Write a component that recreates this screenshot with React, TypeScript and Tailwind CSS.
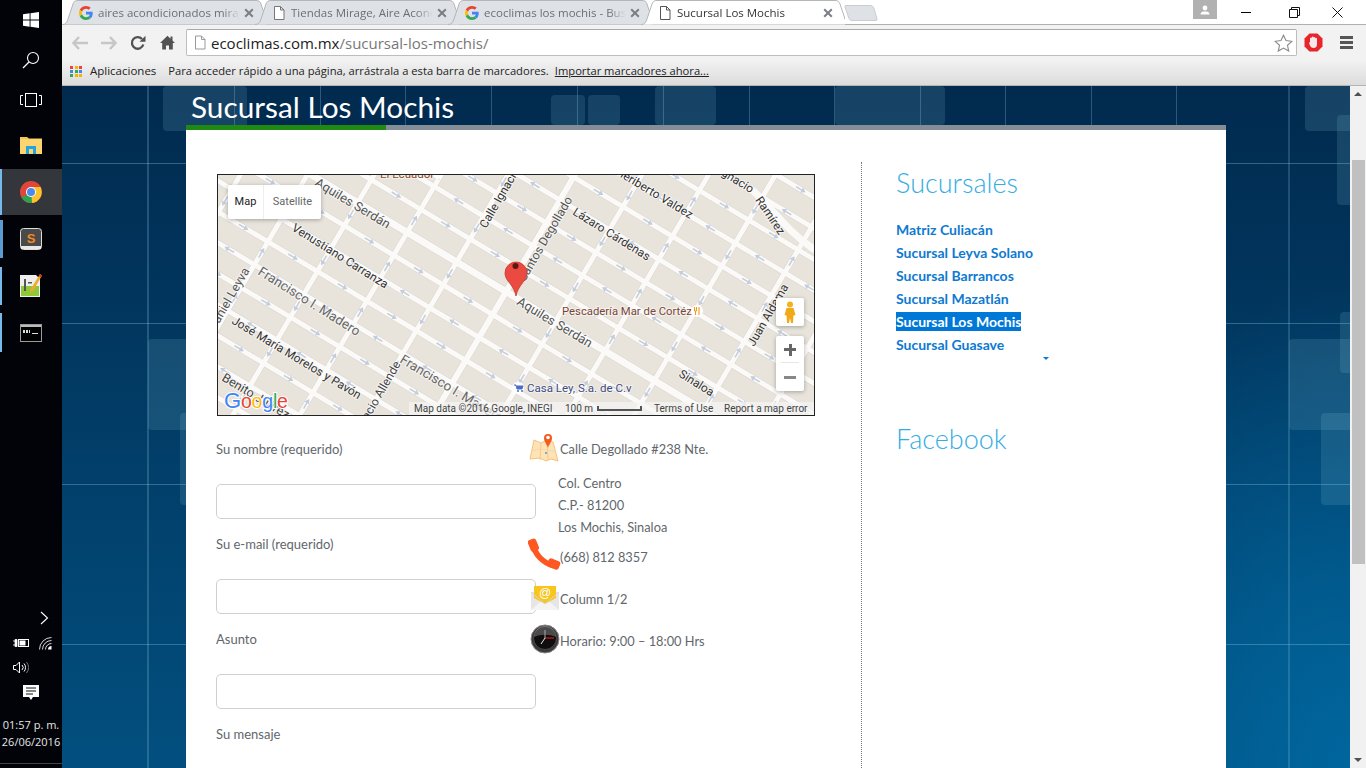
import React from "react";

const GoogleG = ({ size = 14 }: { size?: number }) => (
  <svg width={size} height={size} viewBox="0 0 48 48" className="shrink-0">
    <path fill="#EA4335" d="M24 9.5c3.54 0 6.71 1.22 9.21 3.6l6.85-6.85C35.9 2.38 30.47 0 24 0 14.62 0 6.51 5.38 2.56 13.22l7.98 6.19C12.43 13.72 17.74 9.5 24 9.5z" />
    <path fill="#4285F4" d="M46.98 24.55c0-1.57-.15-3.09-.38-4.55H24v9.02h12.94c-.58 2.96-2.26 5.48-4.78 7.18l7.73 6c4.51-4.18 7.09-10.36 7.09-17.65z" />
    <path fill="#FBBC05" d="M10.53 28.59c-.5-1.45-.78-2.99-.78-4.59s.27-3.14.78-4.59l-7.98-6.19C.92 16.46 0 20.12 0 24c0 3.88.92 7.54 2.56 10.78l7.97-6.19z" />
    <path fill="#34A853" d="M24 48c6.48 0 11.93-2.13 15.89-5.81l-7.73-6c-2.15 1.45-4.92 2.3-8.16 2.3-6.26 0-11.57-4.22-13.47-9.91l-7.98 6.19C6.51 42.62 14.62 48 24 48z" />
  </svg>
);

const PageIcon = ({ color = "#666", w = 12, h = 14 }: { color?: string; w?: number; h?: number }) => (
  <svg width={w} height={h} viewBox="0 0 12 14" className="shrink-0">
    <path d="M1.5 .5h6l3.5 3.5v9.5h-9.5z M7.5 .5v3.5h3.5" fill="#fff" stroke={color} strokeWidth="1" />
  </svg>
);

const CloseX = () => (
  <svg width="10" height="10" viewBox="0 0 10 10" className="shrink-0">
    <path d="M1.2 1.2l7.6 7.6M8.8 1.2l-7.6 7.6" stroke="#7b7f85" strokeWidth="2" />
  </svg>
);

type TabProps = { title: string; google?: boolean; active?: boolean };
const Tab = ({ title, google, active }: TabProps) => (
  <div className={`relative h-[24px] w-[204px] -mr-[11px] shrink-0 ${active ? "z-10" : ""}`}>
    <svg width="204" height="25" viewBox="0 0 204 25" className="absolute left-[-4px] top-0">
      <path
        d="M0 24.5C4 24.5 5 22 6 19L11 4C12 1.5 13 .5 16 .5H194C197 .5 198 1.5 199 4L204 19C205 22 206 24.5 208 24.5"
        fill={active ? "#ffffff" : "#dee1e6"}
        stroke="#b4b6b9"
        strokeWidth="1"
      />
    </svg>
    <div className={`absolute top-[6px] ${google ? "left-[13px]" : "left-[14px]"}`}>
      {google ? <GoogleG size={14} /> : <PageIcon color={active ? "#555" : "#777"} />}
    </div>
    <div
      className={`absolute left-[32px] top-[4px] w-[142px] overflow-hidden whitespace-nowrap text-[11.5px] leading-[18px] font-['Open_Sans',sans-serif] [mask-image:linear-gradient(90deg,#000_88%,transparent)] ${active ? "text-[#333]" : "text-[#6c6f73]"}`}
    >
      {title}
    </div>
    <div className="absolute left-[178px] top-[8px]">
      <CloseX />
    </div>
  </div>
);

const TitleBar = () => (
  <div className="relative flex h-[25px] shrink-0 items-start border-b border-[#b0b0b0] bg-white pl-[4px]">
    <Tab google title="aires acondicionados mirage" />
    <Tab title="Tiendas Mirage, Aire Acondicion" />
    <Tab google title="ecoclimas los mochis - Busc" />
    <Tab active title="Sucursal Los Mochis" />
    <svg width="36" height="18" viewBox="0 0 36 18" className="ml-[6px] mt-[4px] shrink-0">
      <path d="M2 1.5h24c2 0 3 .6 4 3L33 15c.3 1-.3 1.5-1 1.5H8c-1.5 0-2.5-.6-3-2L1 3c-.3-1 0-1.5 1-1.5z" fill="#dee1e6" stroke="#c9ccd1" />
    </svg>
    <div className="ml-auto flex h-[24px] items-start">
      <div className="flex h-[19px] w-[24px] items-center justify-center bg-[#b1b1b1]">
        <svg width="10" height="10" viewBox="0 0 10 10">
          <circle cx="5" cy="3" r="2.4" fill="#fff" />
          <path d="M.5 9.5c0-2.5 2-3 4.5-3s4.500.5 4.500 3z" fill="#fff" />
        </svg>
      </div>
      <div className="ml-[24px] flex h-[24px] w-[10px] items-center">
        <div className="h-px w-[10px] bg-black" />
      </div>
      <div className="ml-[38px] flex h-[24px] w-[12px] items-center">
        <svg width="11" height="11" viewBox="0 0 11 11">
          <path d="M.5 2.500h8v8h-8zM2.500 2.500v-2h8v8h-2" fill="none" stroke="#111" />
        </svg>
      </div>
      <div className="ml-[31px] mr-[23px] flex h-[24px] w-[11px] items-center">
        <svg width="11" height="11" viewBox="0 0 11 11">
          <path d="M.5 .5l10 10M10.500 .5l-10 10" stroke="#111" />
        </svg>
      </div>
    </div>
  </div>
);

const Toolbar = () => (
  <div className="flex h-[35px] shrink-0 items-center bg-[#f2f2f2] pl-[10px] pr-[13px]">
    <svg width="16" height="14" viewBox="0 0 16 14" className="shrink-0">
      <path d="M7 1L1.500 7 7 13M2 7h14" fill="none" stroke="#c6c6c6" strokeWidth="2.400" />
    </svg>
    <svg width="16" height="14" viewBox="0 0 16 14" className="ml-[13px] shrink-0">
      <path d="M9 1l5.500 6L9 13M14 7H0" fill="none" stroke="#c6c6c6" strokeWidth="2.400" />
    </svg>
    <svg width="16" height="16" viewBox="0 0 16 16" className="ml-[13px] shrink-0">
      <path d="M13.300 9.500A5.800 5.800 0 1 1 12 4" fill="none" stroke="#525252" strokeWidth="2.300" />
      <path d="M9.500 6.800L15.500 6.800 15.500 .8z" fill="#525252" />
    </svg>
    <svg width="15" height="15" viewBox="0 0 15 15" className="ml-[14px] shrink-0">
      <path d="M7.500 .8L0 8h2.200v6.500h3.800v-4h3v4h3.800V8H15l-2.500-2.400V1.500h-2v2.200z" fill="#525252" />
    </svg>
    <div className="ml-[11px] flex h-[27px] flex-1 items-center rounded-[2px] border border-[#bdbdbd] border-t-[#a9a9a9] bg-white pl-[7px] pr-[3px]">
      <PageIcon color="#9a9a9a" w={12} h={15} />
      <div className="ml-[5px] whitespace-nowrap font-['Open_Sans',sans-serif] text-[15px] leading-[20px]">
        <span className="text-[#222]">ecoclimas.com.mx</span>
        <span className="text-[#777]">/sucursal-los-mochis/</span>
      </div>
      <svg width="19" height="18" viewBox="0 0 19 18" className="ml-auto shrink-0">
        <path d="M9.500 1.200l2.500 5.400 5.800.7-4.300 4 1.200 5.800-5.200-3-5.200 3 1.200-5.800-4.300-4 5.800-.7z" fill="#fff" stroke="#8a8a8a" strokeWidth="1.100" />
      </svg>
    </div>
    <svg width="19" height="19" viewBox="0 0 19 19" className="ml-[8px] shrink-0 -translate-x-px">
      <path d="M5.500 .5h8l5 5v8l-5 5h-8l-5-5v-8z" fill="#e8242a" />
      <path d="M6 9V5.200a1 1 0 0 1 1.700 0V4a1 1 0 0 1 1.800 0v.5a1 1 0 0 1 1.800 0v1a1 1 0 0 1 1.700 0V11c0 2.500-1 4-3.500 4-2 0-2.800-1-3.500-2.500L5 10z" fill="#f4e8e8" />
    </svg>
    <div className="ml-[16px] flex w-[13px] shrink-0 flex-col gap-[2px]">
      <div className="h-[3px] bg-[#555]" />
      <div className="h-[3px] bg-[#555]" />
      <div className="h-[3px] bg-[#555]" />
    </div>
  </div>
);

const BookmarksBar = () => {
  const colors = ["#e8453c", "#f4b400", "#e8453c", "#4285f4", "#34a853", "#4285f4", "#34a853", "#f4b400", "#f4b400"];
  return (
    <div className="flex h-[26px] shrink-0 items-center border-b border-[#b4b4b4] bg-[linear-gradient(180deg,#f2f2f2,#dcdcdc)] pb-[3px] pl-[8px] font-['Open_Sans',sans-serif] text-[11.2px] text-[#222]">
      <div className="grid w-[13px] shrink-0 grid-cols-3 gap-[1px]">
        {colors.map((c, i) => (
          <div key={i} className="h-[3px] w-[3px]" style={{ background: c }} />
        ))}
      </div>
      <span className="ml-[7px] whitespace-nowrap text-[11.500px]">Aplicaciones</span>
      <span className="ml-[12px] whitespace-nowrap">Para acceder rápido a una página, arrástrala a esta barra de marcadores.</span>
      <span className="ml-[6px] whitespace-nowrap underline">Importar marcadores ahora...</span>
    </div>
  );
};

const Taskbar = () => (
  <div className="flex h-full w-[62px] shrink-0 flex-col bg-[#010308] text-white">
    <div className="flex h-[40px] items-center justify-center">
      <svg width="16" height="16" viewBox="0 0 16 16">
        <path d="M0 2.300L6.600 1.300V7.500H0zM7.500 1.200L16 0V7.500H7.500zM0 8.400H6.600V14.700L0 13.700zM7.500 8.400H16V16L7.500 14.800z" fill="#fff" />
      </svg>
    </div>
    <div className="flex h-[40px] items-center justify-center">
      <svg width="18" height="18" viewBox="0 0 18 18">
        <circle cx="11" cy="7" r="5.500" fill="none" stroke="#fff" strokeWidth="1.100" />
        <path d="M7 11l-6 6" stroke="#fff" strokeWidth="1.300" />
      </svg>
    </div>
    <div className="flex h-[40px] items-center justify-center">
      <svg width="22" height="14" viewBox="0 0 22 14">
        <rect x="5.500" y=".5" width="11" height="13" fill="none" stroke="#fff" />
        <path d="M3 2.500H.5v9H3M19 2.500h2.500v9H19" fill="none" stroke="#fff" />
      </svg>
    </div>
    <div className="flex h-[49px] items-center justify-center">
      <svg width="22" height="18" viewBox="0 0 22 18">
        <path d="M0 1h7l2 1.500h13V18H0z" fill="#f6c652" />
        <path d="M0 3h22v15H0z" fill="#fbd56f" />
        <path d="M6 18v-8h10v8h-3v-5H9v5z" fill="#23a3e0" />
      </svg>
    </div>
    <div className="relative flex h-[46px] items-center justify-center bg-[#33363a]">
      <div className="absolute bottom-0 left-0 top-0 w-[2px] bg-[#76b9ed]" />
      <svg width="22" height="22" viewBox="0 0 22 22">
        <circle cx="11" cy="11" r="11" fill="#e0463a" />
        <path d="M11 11L1.500 16.500A11 11 0 0 0 11 22c1 0 1.500 0 2-.2z" fill="#2fa24f" />
        <path d="M11 6h9.500A11 11 0 0 1 12 22z" fill="#f9c52e" />
        <circle cx="11" cy="11" r="5" fill="#fff" />
        <circle cx="11" cy="11" r="4" fill="#4a89f0" />
      </svg>
    </div>
    <div className="relative mt-[5px] flex h-[38px] items-center justify-center">
      <div className="absolute bottom-0 left-0 top-0 w-[3px] bg-[#5c9bd0]" />
      <svg width="22" height="22" viewBox="0 0 22 22">
        <rect x=".5" y=".5" width="21" height="21" rx="3" fill="#4a4a4a" stroke="#ddd" />
        <path d="M1 18h20v3H1z" fill="#e9e9e9" />
        <text x="11" y="15" textAnchor="middle" fontSize="13" fontWeight="700" fill="#f08a24" fontFamily="Liberation Sans, sans-serif">S</text>
      </svg>
    </div>
    <div className="relative mt-[9px] flex h-[38px] items-center justify-center">
      <div className="absolute bottom-0 left-0 top-0 w-[2px] bg-[#76b9ed]" />
      <svg width="22" height="24" viewBox="0 0 22 24">
        <path d="M0 1h16l4 4v18H0z" fill="#eee" />
        <path d="M1 12h18v10H1z" fill="#8fc93a" />
        <path d="M4 5h2v12H4zM8 8h4v1.500H8z" fill="#555" />
        <path d="M20 0l2 1.500L13 17l-3 2 .5-3.500z" fill="#f0a928" />
        <path d="M20 0l2 1.500-1.200 2L18.800 2z" fill="#c0392b" />
      </svg>
    </div>
    <div className="relative mt-[8px] flex h-[39px] items-center justify-center">
      <div className="absolute bottom-0 left-0 top-0 w-[2px] bg-[#76b9ed]" />
      <svg width="22" height="18" viewBox="0 0 22 18">
        <rect x=".5" y=".5" width="21" height="17" fill="#000" stroke="#9a9a9a" />
        <path d="M1 1h20v2H1z" fill="#bbb" />
        <path d="M3 6h2v3H3zM6 6h2v3H6zM9 6h1v3H9zM12 9h6v1h-6z" fill="#ddd" />
      </svg>
    </div>
    <div className="mt-auto flex flex-col">
      <div className="flex h-[24px] items-center justify-end pr-[13px]">
        <svg width="9" height="14" viewBox="0 0 9 14">
          <path d="M1 1l6.500 6L1 13" fill="none" stroke="#fff" strokeWidth="1.100" />
        </svg>
      </div>
      <div className="flex h-[26px] items-center">
        <svg width="16" height="10" viewBox="0 0 16 10" className="ml-[13px]">
          <path d="M0 3h2M0 7h2M2 1.500h2v7H2z" stroke="#fff" fill="#fff" strokeWidth=".8" />
          <rect x="5.500" y="1.500" width="10" height="7" fill="none" stroke="#fff" />
          <rect x="6.500" y="2.500" width="6" height="5" fill="#fff" />
        </svg>
        <svg width="14" height="13" viewBox="0 0 14 13" className="ml-[10px]">
          <path d="M.5 12.500a12 12 0 0 1 12-12M3.500 12.500a9 9 0 0 1 9-9M6.500 12.500a6 6 0 0 1 6-6" fill="none" stroke="#d8d8d8" />
          <path d="M9 12.500a3.500 3.500 0 0 1 3.500-3.500v3.500z" fill="#fff" />
        </svg>
      </div>
      <div className="flex h-[22px] items-center pl-[13px]">
        <svg width="16" height="13" viewBox="0 0 16 13">
          <path d="M.5 4.500h2.500l3.500-3.500v11L3 8.500H.5z" fill="none" stroke="#fff" />
          <path d="M9 4a3.500 3.500 0 0 1 0 5M11 2.500a6 6 0 0 1 0 8" fill="none" stroke="#fff" />
          <path d="M13.500 1a9 9 0 0 1 0 11" fill="none" stroke="#777" />
        </svg>
      </div>
      <div className="flex h-[29px] items-center justify-center">
        <svg width="16" height="16" viewBox="0 0 16 16">
          <path d="M0 0h16v12H10l-2 3-2-3H0z" fill="#fff" />
          <path d="M3 3h10M3 6h10M3 9h7" stroke="#111" />
        </svg>
      </div>
      <div className="mt-[10px] flex h-[17px] items-center justify-center whitespace-nowrap font-['Open_Sans',sans-serif] text-[11px] text-[#e6e6e6]">01:57 p. m.</div>
      <div className="flex h-[17px] items-center justify-center whitespace-nowrap font-['Open_Sans',sans-serif] text-[11px] text-[#e6e6e6]">26/06/2016</div>
      <div className="mt-[12px] h-px bg-[#444]" />
      <div className="h-[4px]" />
    </div>
  </div>
);

const cRoads = Array.from({ length: 20 }, (_, i) => -322 + 31 * i);
const dRoads = Array.from({ length: 12 }, (_, i) => 584 + 113.7 * i - 0.5);

const Arrow = ({ x, y, a }: { x: number; y: number; a: number }) => (
  <g transform={`translate(${x} ${y}) rotate(${a})`}>
    <path d="M-5 0H2" stroke="#c3cddd" strokeWidth="1.500" />
    <path d="M1.500 -2.800L6 0 1.500 2.800z" fill="#c3cddd" />
  </g>
);

type L = { t: string; x: number; y: number; a: number; c?: string; s?: number };
const labels: L[] = [
  { t: "Aquiles Serdán", x: 314, y: 185, a: 31, c: "#555", s: 12.8 },
  { t: "Venustiano Carranza", x: 291, y: 230, a: 32, c: "#333", s: 12 },
  { t: "Francisco I. Madero", x: 257, y: 274, a: 32, c: "#666", s: 13.4 },
  { t: "José María Morelos y Pavón", x: 231, y: 323, a: 31, c: "#333", s: 11.8 },
  { t: "Benito Juárez", x: 221, y: 380, a: 31, c: "#444", s: 12.5 },
  { t: "Francisco I. Madero", x: 399, y: 362, a: 31, c: "#666", s: 13.4 },
  { t: "Ignacio Allende", x: 360, y: 435, a: -60, c: "#444", s: 12 },
  { t: "Daniel Leyva", x: 215, y: 331, a: -60, c: "#555", s: 12.5 },
  { t: "Calle Ignacio", x: 486, y: 229, a: -60, c: "#333", s: 11.8 },
  { t: "Santos Degollado", x: 525, y: 282, a: -60, c: "#555", s: 12.2 },
  { t: "Lázaro Cárdenas", x: 572, y: 214, a: 32, c: "#333", s: 11.8 },
  { t: "Heriberto Valdez", x: 615, y: 174, a: 31, c: "#333", s: 11.8 },
  { t: "Ignacio", x: 718, y: 173, a: 32, c: "#333", s: 11.8 },
  { t: "Ramírez", x: 755, y: 200, a: 56, c: "#333", s: 11.8 },
  { t: "Juan Aldama", x: 754, y: 347, a: -60, c: "#333", s: 11.8 },
  { t: "Sinaloa", x: 678, y: 376, a: 32, c: "#333", s: 11.8 },
  { t: "Aquiles Serdán", x: 516, y: 304, a: 31, c: "#555", s: 12.8 },
];

const MapBox = () => {
  const cross = (c: number, d: number) => {
    const x = (d - c) / 2.3;
    return [x, 0.6 * x + c];
  };
  return (
    <div className="relative h-[242px] w-[598px] overflow-hidden border border-[#222] bg-[#e8e4dc]">
      <svg width="596" height="240" viewBox="218 175 596 240" className="block">
        <rect x="218" y="175" width="596" height="240" fill="#e8e4dc" />
        {cRoads.map((c) => (
          <line key={`ca${c}`} x1="100" y1={60 + c} x2="900" y2={540 + c} stroke="#dad6cc" strokeWidth={c === -12 || c === 113 ? 8 : 6} />
        ))}
        {dRoads.map((d) => (
          <line key={`da${d}`} x1={(d - 100) / 1.7} y1="100" x2={(d - 500) / 1.7} y2="500" stroke="#dad6cc" strokeWidth={d > 1150 && d < 1170 ? 7 : 6} />
        ))}
        {cRoads.map((c) => (
          <line key={`c${c}`} x1="100" y1={60 + c} x2="900" y2={540 + c} stroke="#fbfaf8" strokeWidth={c === -12 || c === 113 ? 7 : 5} />
        ))}
        {dRoads.map((d) => (
          <line key={`d${d}`} x1={(d - 100) / 1.7} y1="100" x2={(d - 500) / 1.7} y2="500" stroke="#fbfaf8" strokeWidth={d > 1150 && d < 1170 ? 6 : 5} />
        ))}
        <path d="M752 190C770 205 785 230 815 250" fill="none" stroke="#fbfaf8" strokeWidth="7" />
        {cRoads.flatMap((c, i) =>
          c === -12 || c === 113
            ? []
            : dRoads.slice(0, -1).map((d, j) => {
                const [x1, y1] = cross(c, d);
                const [x2, y2] = cross(c, dRoads[j + 1]);
                return <Arrow key={`ac${c}${j}`} x={(x1 + x2) / 2} y={(y1 + y2) / 2} a={i % 2 ? 31 : 211} />;
              })
        )}
        {dRoads.flatMap((d, j) =>
          d > 1150 && d < 1170
            ? []
            : cRoads.slice(0, -1).map((c, i) => {
                if ((i + j) % 2) return null;
                const [x1, y1] = cross(c, d);
                const [x2, y2] = cross(cRoads[i + 1], d);
                return <Arrow key={`ad${j}${i}`} x={(x1 + x2) / 2} y={(y1 + y2) / 2} a={j % 2 ? -60 : 120} />;
              })
        )}
        <g fontFamily="Roboto, sans-serif" fontSize="11.500">
          {labels.map((l, i) => (
            <text key={i} transform={`translate(${l.x} ${l.y}) rotate(${l.a})`} fontSize={l.s} fill={l.c} stroke="#fff" strokeWidth="2" strokeOpacity=".55" paintOrder="stroke">
              {l.t}
            </text>
          ))}
          <text x="380" y="178" fill="#8a4a2c" stroke="#fff" strokeWidth="2" strokeOpacity=".5" paintOrder="stroke">El Ecuador</text>
          <circle cx="438" cy="174" r="5" fill="#fff" />
          <text x="562" y="315" fontSize="11.300" fill="#7a4536" stroke="#fff" strokeWidth="2" strokeOpacity=".55" paintOrder="stroke">Pescadería Mar de Cortéz</text>
          <text x="527" y="392" fill="#3f4b80" stroke="#fff" strokeWidth="2" strokeOpacity=".55" paintOrder="stroke">Casa Ley, S.a. de C.v</text>
        </g>
        <circle cx="697" cy="311" r="6" fill="#fff" />
        <path d="M694.500 307v4M696.500 307v4M694.500 311h2M695.500 311v4M699 307v8" stroke="#ee9a22" strokeWidth="1.100" fill="none" />
        <circle cx="518" cy="388" r="6" fill="#fff" />
        <path d="M514 385h2l1 4h5l1-3h-6" fill="#4d6cc8" stroke="#4d6cc8" />
        <circle cx="518" cy="391" r="1" fill="#4d6cc8" />
        <circle cx="522" cy="391" r="1" fill="#4d6cc8" />
        <path d="M516 296c-1.500-7-5-11-8-15-2-3-3-5-3-8a11 11 0 0 1 22 0c0 3-1 5-3 8-3 4-6.500 8-8 15z" fill="#ea4a3f" stroke="#c8392f" strokeWidth=".8" />
        <circle cx="515.500" cy="266" r="3" fill="#5e1813" />
        <g fontFamily="Liberation Sans, sans-serif" fontSize="19.500" stroke="#fff" strokeWidth="2" paintOrder="stroke">
          <text x="224" y="408" letterSpacing="-.2">
            <tspan fill="#4285f4" fontSize="22">G</tspan>
            <tspan fill="#ea4335">o</tspan>
            <tspan fill="#fbbc05">o</tspan>
            <tspan fill="#4285f4">g</tspan>
            <tspan fill="#34a853">l</tspan>
            <tspan fill="#ea4335">e</tspan>
          </text>
        </g>
      </svg>
      <div className="absolute left-[10px] top-[10px] flex h-[34px] w-[93px] rounded-[2px] bg-white font-['Roboto',sans-serif] text-[11px] shadow-[0_1px_4px_rgba(0,0,0,0.3)]">
        <div className="flex w-[36px] items-center justify-center border-r border-[#eee] text-[#222]">Map</div>
        <div className="flex flex-1 items-center justify-center text-[#666]">Satellite</div>
      </div>
      <div className="absolute left-[558px] top-[123px] flex h-[28px] w-[28px] items-center justify-center rounded-[2px] bg-white shadow-[0_1px_4px_rgba(0,0,0,0.3)]">
        <svg width="12" height="22" viewBox="0 0 12 22">
          <circle cx="6" cy="3.500" r="3" fill="#f6b11a" />
          <path d="M2.500 7h7l2 7-2 .5-.5 7.500H7l-1-5-1 5H3l-.5-7.500-2-.5z" fill="#f2a918" />
        </svg>
      </div>
      <div className="absolute left-[558px] top-[161px] flex h-[55px] w-[28px] flex-col items-center rounded-[2px] bg-white shadow-[0_1px_4px_rgba(0,0,0,0.3)]">
        <div className="relative h-[27px] w-[18px] border-b border-[#e6e6e6]">
          <div className="absolute left-[3px] top-[12px] h-[3px] w-[12px] bg-[#666]" />
          <div className="absolute left-[7.500px] top-[8px] h-[12px] w-[3px] bg-[#666]" />
        </div>
        <div className="relative h-[27px] w-[18px]">
          <div className="absolute left-[3px] top-[13px] h-[3px] w-[12px] bg-[#888]" />
        </div>
      </div>
      <div className="absolute bottom-0 left-[191px] right-0 flex h-[13px] items-center whitespace-nowrap bg-[rgba(245,245,245,0.7)] pl-[5px] font-['Roboto',sans-serif] text-[10px] text-[#444]">
        <span className="w-[151px]">Map data ©2016 Google, INEGI</span>
        <span className="w-[32px]">100 m</span>
        <span className="mr-[12px] h-[5px] w-[45px] border-x-2 border-b-2 border-[#555]" />
        <span className="w-[70px]">Terms of Use</span>
        <span>Report a map error</span>
      </div>
    </div>
  );
};

const Field = ({ label }: { label: string }) => (
  <div className="w-[314px]">
    <div className="h-[22px] leading-[22px]">{label}</div>
    <div className="mb-[14px] mt-[24px] h-[35px] w-[320px] rounded-[5px] border border-[#d0d0d0] bg-white" />
  </div>
);

const Row = ({ icon, text, className = "" }: { icon: React.ReactNode; text: string; className?: string }) => (
  <div className={`flex h-[22px] items-center whitespace-nowrap leading-[22px] ${className}`}>
    <div className="flex w-[30px] shrink-0 justify-center">{icon}</div>
    {text}
  </div>
);

const MapIcon = () => (
  <svg width="30" height="32" viewBox="0 0 30 32" className="-my-[6px] shrink-0 -translate-y-[2px] -translate-x-px">
    <path d="M1 28L5 9l7 3 6-3 6 2 5 19-7-2-5 2-6-3z" fill="#fde3b6" stroke="#f5c27d" />
    <path d="M12 12l-1 17M18 10l1 19" stroke="#f5c98f" fill="none" />
    <path d="M2 20l9-2 7 1 9 2" stroke="#f8d7a3" fill="none" />
    <path d="M19 17c-1-4-4-6-4-10a4 4 0 0 1 8 0c0 4-3 6-4 10z" fill="#f25c1f" />
    <circle cx="19" cy="6.500" r="1.800" fill="#fff" />
    <circle cx="17" cy="22" r="1" fill="#3f9fd0" />
  </svg>
);
const PhoneIcon = () => (
  <svg width="33" height="34" viewBox="0 0 32 33" className="-my-[6px] shrink-0 -translate-y-[2px] translate-x-[-1px]">
    <path d="M5 6c1 9 9 18 20 21" fill="none" stroke="#ff5722" strokeWidth="5.500" />
    <rect x="1" y="1" width="8.500" height="12" rx="2.500" fill="#ff5722" transform="rotate(-22 5 7)" />
    <rect x="19" y="21" width="12" height="8.500" rx="2.500" fill="#ff5722" transform="rotate(22 25 25)" />
  </svg>
);
const MailIcon = () => (
  <svg width="30" height="28" viewBox="0 0 30 28" className="-my-[4px] shrink-0 -translate-y-[2px]">
    <path d="M1 9h28v18H1z" fill="#e6e6e6" />
    <path d="M1 27L15 15l14 12z" fill="#f4f4f4" />
    <path d="M4 3l22 0v12L15 21 4 15z" fill="#f7c51c" />
    <text x="15" y="14" textAnchor="middle" fontSize="12" fill="#fff" fontFamily="Liberation Sans, sans-serif">@</text>
    <path d="M1 9l14 12L29 9" fill="none" stroke="#d6d6d6" />
  </svg>
);
const ClockIcon = () => (
  <svg width="30" height="30" viewBox="0 0 30 30" className="-my-[4px] shrink-0 -translate-y-[2px]">
    <circle cx="15" cy="15" r="14" fill="#3a3a3a" stroke="#8a8a8a" />
    <circle cx="15" cy="14" r="11.500" fill="#0f0d0d" stroke="#666" strokeWidth=".6" />
    <path d="M4 13a11 11 0 0 1 22 0c-6-3-16-3-22 0z" fill="#ffffff" opacity=".25" />
    <path d="M15 14h9" stroke="#e02020" strokeWidth="1.100" />
    <path d="M15 14l-4 6" stroke="#eee" />
    <path d="M15 14V6" stroke="#aaa" />
  </svg>
);

const Contact = () => (
  <div className="text-[12.800px] text-[#5f676c]">
    <Row icon={<MapIcon />} text="Calle Degollado #238 Nte." />
    <div className="ml-[28px] mt-[12px] leading-[22px]">
      <div>Col. Centro</div>
      <div>C.P.- 81200</div>
      <div>Los Mochis, Sinaloa</div>
    </div>
    <Row className="mt-[8px]" icon={<PhoneIcon />} text="(668) 812 8357" />
    <Row className="mt-[20px]" icon={<MailIcon />} text="Column 1/2" />
    <Row className="mt-[20px]" icon={<ClockIcon />} text="Horario: 9:00 – 18:00 Hrs" />
  </div>
);

const links = ["Matriz Culiacán", "Sucursal Leyva Solano", "Sucursal Barrancos", "Sucursal Mazatlán", "Sucursal Los Mochis", "Sucursal Guasave"];

const Sidebar = () => (
  <div className="flex-1 pl-[34px]">
    <h2 className="h-[41px] text-[27px] font-light leading-[41px] text-[#35ade3]">Sucursales</h2>
    <div className="mt-[15px] flex flex-col items-start text-[14px] font-bold text-[#0e7ad1]">
      {links.map((l, i) => (
        <div key={l} className="h-[23px] leading-[23px]">
          <span className={i === 4 ? "bg-[#0078d7] py-px text-white" : ""}>{l}</span>
        </div>
      ))}
    </div>
    <div className="ml-[147px] mt-[1px] h-0 w-0 border-x-[3px] border-t-[3px] border-x-transparent border-t-[#0e7ad1]" />
    <h2 className="mt-[58px] h-[41px] text-[27px] font-light leading-[41px] text-[#35ade3]">Facebook</h2>
  </div>
);

const Backdrop = () => {
  const tops = [147, 234, 320, 405, 491, 577, 663, 749, 834, 920, 1005, 1091, 1176];
  const rects = [
    "left-[101px] top-0 h-[45px] w-[84px]",
    "left-[489px] top-[9px] h-[30px] w-[34px]",
    "left-[526px] top-[9px] h-[30px] w-[32px]",
    "left-[593px] top-0 h-[39px] w-[61px]",
    "left-[773px] top-0 h-[39px] w-[110px]",
    "left-[86px] top-[253px] h-[91px] w-[100px]",
    "left-[118px] top-[327px] h-[92px] w-[60px]",
    "left-[1243px] top-0 h-[45px] w-[60px]",
    "left-[1275px] top-[29px] h-[90px] w-[30px]",
    "left-[1278px] top-[226px] h-[61px] w-[30px]",
    "left-[1227px] top-[253px] h-[91px] w-[80px]",
    "left-[1259px] top-[327px] h-[92px] w-[40px]",
  ];
  return (
    <>
      {rects.map((r) => (
        <div key={r} className={`absolute rounded-[4px] bg-[rgba(150,205,225,0.15)] ${r}`} />
      ))}
      {[77, 237, 398, 558].map((y) => (
        <div key={y} className="absolute left-0 right-0 h-px bg-[rgba(125,190,220,0.38)]" style={{ top: y }} />
      ))}
      {tops.map((x, i) => (
        <div key={x} className={`absolute top-0 ${i === 0 ? "bottom-0 w-[2px] bg-[rgba(140,200,225,0.25)]" : "h-[39px] w-px bg-[rgba(140,200,225,0.3)]"}`} style={{ left: x - 62 }} />
      ))}
      <div className="absolute bottom-0 top-0 w-[2px] bg-[rgba(140,200,225,0.22)]" style={{ left: 1288 - 62 }} />
    </>
  );
};

const Page = () => (
  <div className="relative flex-1 overflow-hidden bg-[radial-gradient(ellipse_340px_480px_at_100%_100%,#00669e,transparent),linear-gradient(180deg,#012a4e,#024f7f)] pl-[124px] font-['Lato',sans-serif] text-[13px]">
    <Backdrop />
    <div className="relative w-[1040px]">
      <h1 className="h-[39px] whitespace-nowrap pl-[5px] text-[29.800px] font-normal leading-[42px] text-white">Sucursal Los Mochis</h1>
      <div className="flex h-[5px]">
        <div className="w-[200px] bg-[#1f8a12]" />
        <div className="flex-1 bg-[#858e96]" />
      </div>
      <div className="h-[700px] bg-white pt-[32px]">
        <div className="flex h-full">
          <div className="h-full w-[676px] shrink-0 border-r border-dotted border-[#777] pl-[31px] pt-[12px]">
            <MapBox />
            <div className="-ml-px mt-[22px] flex text-[#5f676c]">
              <div>
                <Field label="Su nombre (requerido)" />
                <Field label="Su e-mail (requerido)" />
                <Field label="Asunto" />
                <div className="h-[22px] leading-[22px]">Su mensaje</div>
              </div>
              <Contact />
            </div>
          </div>
          <Sidebar />
        </div>
      </div>
    </div>
  </div>
);

const Scrollbar = () => (
  <div className="flex h-full w-[16px] shrink-0 flex-col items-center bg-[#f1f1f1]">
    <div className="mt-[6px] h-0 w-0 border-x-[4px] border-b-[4px] border-x-transparent border-b-[#505050]" />
    <div className="mt-[64px] h-[404px] w-[13px] bg-[#c0c0c0]" />
    <div className="mb-[6px] mt-auto h-0 w-0 border-x-[4px] border-t-[4px] border-x-transparent border-t-[#505050]" />
  </div>
);

export default function App() {
  return (
    <div className="flex h-screen w-full overflow-hidden bg-white">
      <Taskbar />
      <div className="flex min-w-0 flex-1 flex-col">
        <TitleBar />
        <Toolbar />
        <BookmarksBar />
        <div className="flex min-h-0 flex-1">
          <Page />
          <Scrollbar />
        </div>
      </div>
    </div>
  );
}
